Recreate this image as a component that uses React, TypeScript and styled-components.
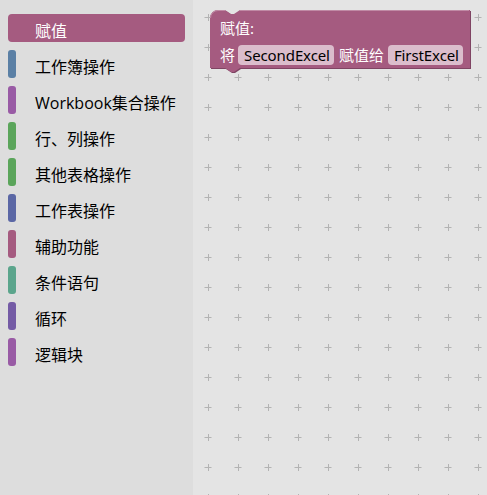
import React from "react";
import styled, { createGlobalStyle } from "styled-components";

const Global = createGlobalStyle`
  html, body { margin: 0; padding: 0; }
  body {
    font-family: "Noto Sans", "Noto Sans CJK SC", sans-serif;
    background: #e4e4e4;
  }
`;

const Page = styled.div`
  display: flex;
  width: 487px;
  height: 495px;
  overflow: hidden;
`;

const Toolbox = styled.div`
  width: 193px;
  flex: none;
  background: #dddddd;
  padding: 14px 8px 0 8px;
  box-sizing: border-box;
  display: flex;
  flex-direction: column;
  gap: 8px;
`;

const Category = styled.div<{ $color: string; $selected?: boolean }>`
  position: relative;
  height: 28px;
  box-sizing: border-box;
  display: flex;
  align-items: center;
  padding-left: 27px;
  padding-top: 3px;
  border-radius: 4px;
  font-family: "Open Sans", "Noto Sans CJK SC", sans-serif;
  font-size: 16px;
  color: ${(p) => (p.$selected ? "#ffffff" : "#000000")};
  background: ${(p) => (p.$selected ? p.$color : "transparent")};
  white-space: nowrap;
`;

const ColorBar = styled.span<{ $color: string }>`
  position: absolute;
  left: 0;
  top: 0;
  width: 8px;
  height: 28px;
  border-radius: 3px;
  background: ${(p) => p.$color};
`;

const Workspace = styled.div`
  position: relative;
  flex: 1;
  background: #e4e4e4;
  overflow: hidden;
`;

const GridSvg = styled.svg`
  position: absolute;
  inset: 0;
  width: 100%;
  height: 100%;
`;

const Block = styled.div`
  position: absolute;
  width: 260px;
  height: 58px;
`;

const BlockShape = styled.svg`
  position: absolute;
  left: 0;
  top: 0;
  overflow: visible;
`;

const BlockBody = styled.div`
  position: relative;
  padding: 8px 6px 3px 10px;
  display: flex;
  flex-direction: column;
  gap: 7px;
  font-family: "Noto Sans", "Noto Sans CJK SC", sans-serif;
  font-size: 15px;
  color: #ffffff;
`;

const BlockRow = styled.div`
  height: 20px;
  display: flex;
  align-items: center;
  white-space: nowrap;
`;

const Label = styled.span<{ $gap?: number }>`
  margin-right: ${(p) => p.$gap ?? 4}px;
  line-height: 20px;
`;

const Field = styled.span`
  height: 20px;
  line-height: 20px;
  padding: 0 4px 0 6px;
  border-radius: 4px;
  background: #dbbdcc;
  color: #000000;
  letter-spacing: -0.1px;
  margin-right: 5px;
`;

const categories = [
  { name: "赋值", color: "#a55b80", selected: true },
  { name: "工作簿操作", color: "#5b80a5" },
  { name: "Workbook集合操作", color: "#995ba5" },
  { name: "行、列操作", color: "#5ba55b" },
  { name: "其他表格操作", color: "#5ba55b" },
  { name: "工作表操作", color: "#5b67a5" },
  { name: "辅助功能", color: "#a55b80" },
  { name: "条件语句", color: "#5ba58c" },
  { name: "循环", color: "#745ba5" },
  { name: "逻辑块", color: "#995ba5" },
];

const blockPath =
  "M 0,8 A 8,8 0 0,1 8,0 H 15 l 6,4 3,0 6,-4 H 260 V 58 H 30 l -6,4 -3,0 -6,-4 H 0 Z";

export default function App() {
  return (
    <>
      <Global />
      <Page>
        <Toolbox>
          {categories.map((c) => (
            <Category key={c.name} $color={c.color} $selected={c.selected}>
              {!c.selected && <ColorBar $color={c.color} />}
              {c.name}
            </Category>
          ))}
        </Toolbox>
        <Workspace>
          <GridSvg>
            <defs>
              <pattern
                id="grid"
                x="0"
                y="2"
                width="30"
                height="30"
                patternUnits="userSpaceOnUse"
              >
                <path
                  d="M 11.5,15.5 H 18.5 M 15.5,12 V 19"
                  stroke="#b3b3b3"
                  strokeWidth="1"
                  fill="none"
                />
              </pattern>
            </defs>
            <rect x="0" y="0" width="100%" height="100%" fill="url(#grid)" />
          </GridSvg>
          <Block style={{ left: 17, top: 10 }}>
            <BlockShape width="262" height="64">
              <path d={blockPath} fill="#7f4463" transform="translate(1,1)" />
              <path d={blockPath} fill="#a55b80" />
              <path
                d="M 0.5,8 A 7.5,7.5 0 0,1 8,0.5 H 15 M 30,0.5 H 259"
                stroke="#c08aa5"
                strokeWidth="1"
                fill="none"
              />
            </BlockShape>
            <BlockBody>
              <BlockRow>
                <Label>赋值:</Label>
              </BlockRow>
              <BlockRow>
                <Label $gap={3}>将</Label>
                <Field>SecondExcel</Field>
                <Label $gap={4}>赋值给</Label>
                <Field>FirstExcel</Field>
              </BlockRow>
            </BlockBody>
          </Block>
        </Workspace>
      </Page>
    </>
  );
}
